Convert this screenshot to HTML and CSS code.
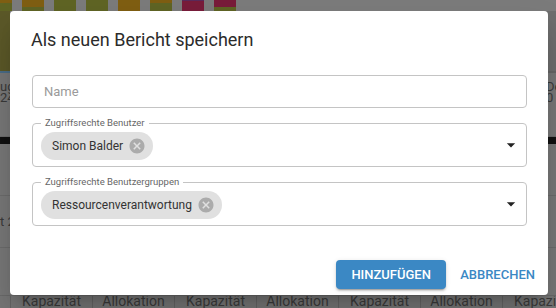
FILE: index.html
```html
<!DOCTYPE html>
<html lang="de">
<head>
    <meta charset="UTF-8">
    <title>Als neuen Bericht speichern</title>
    <link rel="stylesheet" href="styles.css">
</head>
<body>
    <div class="app">
        <div class="bars">
            <span class="bar b-or-ol"></span>
            <span class="bar b-or"></span>
            <span class="bar b-ol"></span>
            <span class="bar b-ol"></span>
            <span class="bar b-orange"></span>
            <span class="bar b-or-ol2"></span>
            <span class="bar b-mag"></span>
            <span class="bar b-mag-ol"></span>
        </div>
        <div class="middle">
            <div class="side">
                <div class="side-olive"></div>
                <div class="side-label">ug<br>24</div>
                <div class="side-black"></div>
                <div class="side-row"></div>
                <div class="side-row">t 2</div>
            </div>
            <div class="center"></div>
            <div class="side side-right">
                <div class="side-olive grey"></div>
                <div class="side-label">De<br>0</div>
                <div class="side-black"></div>
                <div class="side-row"></div>
                <div class="side-row"></div>
            </div>
        </div>
        <div class="thead">
            <span class="th th-first"></span>
            <span class="th">Kapazität</span>
            <span class="th">Allokation</span>
            <span class="th">Kapazität</span>
            <span class="th">Allokation</span>
            <span class="th">Kapazität</span>
            <span class="th">Allokation</span>
            <span class="th">Kapazität</span>
        </div>
    </div>

    <div class="dialog">
        <h2 class="dialog-title">Als neuen Bericht speichern</h2>
        <div class="dialog-content">
            <div class="field field-plain">
                <span class="placeholder">Name</span>
            </div>
            <div class="field field-select">
                <span class="field-label">Zugriffsrechte Benutzer</span>
                <span class="chip">Simon Balder
                    <svg class="chip-x" viewBox="0 0 24 24"><path d="M12 2C6.47 2 2 6.47 2 12s4.47 10 10 10 10-4.47 10-10S17.53 2 12 2zm5 13.59L15.59 17 12 13.41 8.41 17 7 15.59 10.59 12 7 8.41 8.41 7 12 10.59 15.59 7 17 8.41 13.41 12 17 15.59z"/></svg>
                </span>
                <svg class="arrow" viewBox="0 0 24 24"><path d="M7 10l5 5 5-5z"/></svg>
            </div>
            <div class="field field-select">
                <span class="field-label">Zugriffsrechte Benutzergruppen</span>
                <span class="chip">Ressourcenverantwortung
                    <svg class="chip-x" viewBox="0 0 24 24"><path d="M12 2C6.47 2 2 6.47 2 12s4.47 10 10 10 10-4.47 10-10S17.53 2 12 2zm5 13.59L15.59 17 12 13.41 8.41 17 7 15.59 10.59 12 7 8.41 8.41 7 12 10.59 15.59 7 17 8.41 13.41 12 17 15.59z"/></svg>
                </span>
                <svg class="arrow" viewBox="0 0 24 24"><path d="M7 10l5 5 5-5z"/></svg>
            </div>
        </div>
        <div class="dialog-actions">
            <button class="btn btn-primary">Hinzufügen</button>
            <button class="btn btn-text">Abbrechen</button>
        </div>
    </div>
</body>
</html>
```

FILE: styles.css
```css
* {
    box-sizing: border-box;
}
body {
    margin: 0;
    font-family: Roboto, 'Liberation Sans', sans-serif;
    background: #7a7a7a;
    overflow: hidden;
}
.app {
    width: 556px;
    height: 308px;
    display: flex;
    flex-direction: column;
}
.bars {
    height: 11px;
    display: flex;
    gap: 10px;
    background: #7b7b7b;
}
.bar {
    width: 22px;
    height: 11px;
    background: #5f6424;
}
.bar:first-child {
    width: 12px;
}
.b-or-ol {
    background: linear-gradient(#7f5e12 0 3px, #5f6424 3px);
}
.b-or {
    background: linear-gradient(#7f5e12 0 7px, #5f6424 7px);
}
.b-orange {
    background: #7f5e12;
}
.b-or-ol2 {
    background: linear-gradient(#7f5e12 0 3px, #5f6424 3px);
}
.b-mag {
    background: linear-gradient(#5a2a5a 0 1px, #781c3a 1px);
}
.b-mag-ol {
    background: linear-gradient(#781c3a 0 7px, #5f6424 7px);
}
.middle {
    flex: 1;
    display: flex;
}
.side {
    width: 10px;
    display: flex;
    flex-direction: column;
    background: #787878;
    font-size: 13px;
    line-height: 11px;
    color: #3a3a3a;
    overflow: hidden;
    white-space: nowrap;
}
.side-olive {
    height: 62px;
    background: #5b5828;
    border-bottom: 2px solid #4a6c86;
}
.side-olive.grey {
    background: #6e6e6e;
    border-bottom-color: #666;
}
.side-label {
    height: 64px;
    padding-top: 8px;
    border-bottom: 1px solid #6c6c6c;
}
.side-black {
    height: 7px;
    background: #111;
}
.side-row {
    height: 52px;
    border-bottom: 1px solid #6c6c6c;
    padding-top: 20px;
}
.center {
    flex: 1;
}
.side-right {
    margin-left: auto;
}
.thead {
    height: 13px;
    display: flex;
    background: #777;
    border-top: 1px solid #6a6a6a;
    overflow: hidden;
}
.th {
    flex: 0 0 82px;
    border-left: 1px solid #666;
    color: #3c3c3c;
    font-size: 14px;
    line-height: 14px;
    text-align: center;
    margin-top: -2px;
}
.th-first {
    flex-basis: 10px;
    border-left: none;
}

/* dialog */
.dialog {
    position: absolute;
    left: 10px;
    top: 11px;
    width: 538px;
    height: 284px;
    background: #fff;
    border-radius: 4px;
    box-shadow: 0 11px 15px -7px rgba(0,0,0,0.2), 0 24px 38px 3px rgba(0,0,0,0.14);
    display: flex;
    flex-direction: column;
}
.dialog-title {
    margin: 0;
    padding: 16px 21px 0;
    font-size: 18px;
    font-weight: 400;
    line-height: 26px;
    color: #2b2b2b;
}
.dialog-content {
    padding: 22px 21px 0 22px;
    display: flex;
    flex-direction: column;
    gap: 15px;
}
.field {
    position: relative;
    border: 1px solid #c4c4c4;
    border-radius: 4px;
    display: flex;
    align-items: center;
    padding: 0 5px 0 8px;
}
.field-plain {
    height: 33px;
    padding-left: 11px;
}
.field-select {
    height: 44px;
}
.placeholder {
    font-size: 13px;
    color: #9a9a9a;
}
.field-label {
    position: absolute;
    left: 8px;
    top: -6px;
    padding: 0 4px;
    background: #fff;
    font-size: 9.5px;
    line-height: 10px;
    color: #666;
}
.chip {
    display: inline-flex;
    align-items: center;
    gap: 5px;
    height: 28px;
    padding: 0 7px 0 11px;
    border-radius: 14px;
    background: #e0e0e0;
    font-size: 12px;
    color: #333;
    margin-top: 1px;
}
.chip-x {
    width: 18px;
    height: 18px;
    fill: #ababab;
}
.arrow {
    width: 20px;
    height: 20px;
    margin-left: auto;
    fill: #222;
}
.dialog-actions {
    margin-top: auto;
    display: flex;
    justify-content: flex-end;
    align-items: center;
    gap: 8px;
    padding: 0 7px 6px;
}
.btn {
    font-family: Roboto, 'Liberation Sans', sans-serif;
    font-size: 13px;
    font-weight: 500;
    text-transform: uppercase;
    border: none;
    border-radius: 4px;
    height: 29px;
    cursor: pointer;
}
.btn-primary {
    width: 110px;
    background: #3b88c4;
    color: #fff;
    box-shadow: 0 3px 1px -2px rgba(0,0,0,0.2), 0 2px 2px 0 rgba(0,0,0,0.14), 0 1px 5px 0 rgba(0,0,0,0.12);
}
.btn-text {
    background: none;
    color: #3b88c4;
    padding: 0 6px;
}
```
